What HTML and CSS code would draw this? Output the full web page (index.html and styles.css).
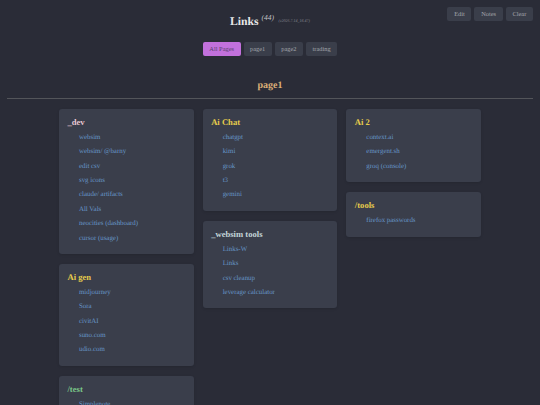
FILE: index.html
```html
<!DOCTYPE html>
<html lang="en">
<head>
    <meta charset="UTF-8">
    <meta name="viewport" content="width=device-width, initial-scale=1.0">
    <title>Links</title>
    <link rel="stylesheet" href="styles.css">
</head>
<body>
    <div class="top-actions">
        <button class="btn">Edit</button>
        <button class="btn">Notes</button>
        <button class="btn">Clear</button>
    </div>
    <h1 class="title">Links <sup class="count">(44)</sup> <span class="stamp">(v2025.7.14_16.47)</span></h1>
    <nav class="tabs">
        <button class="btn tab active">All Pages</button>
        <button class="btn tab">page1</button>
        <button class="btn tab">page2</button>
        <button class="btn tab">trading</button>
    </nav>
    <h2 class="page-name">page1</h2>
    <hr class="divider">
    <main class="columns">
        <div class="column">
            <section class="card">
                <h3 class="pink">_dev</h3>
                <ul>
                    <li><a href="#">websim</a></li>
                    <li><a href="#">websim/ @barny</a></li>
                    <li><a href="#">edit csv</a></li>
                    <li><a href="#">svg icons</a></li>
                    <li><a href="#">claude/ artifacts</a></li>
                    <li><a href="#">All Vals</a></li>
                    <li><a href="#">neocities (dashboard)</a></li>
                    <li><a href="#">cursor (usage)</a></li>
                </ul>
            </section>
            <section class="card">
                <h3 class="yellow">Ai gen</h3>
                <ul>
                    <li><a href="#">midjourney</a></li>
                    <li><a href="#">Sora</a></li>
                    <li><a href="#">civitAI</a></li>
                    <li><a href="#">suno.com</a></li>
                    <li><a href="#">udio.com</a></li>
                </ul>
            </section>
            <section class="card">
                <h3 class="green">/test</h3>
                <ul>
                    <li><a href="#">Simplenote</a></li>
                </ul>
            </section>
        </div>
        <div class="column">
            <section class="card">
                <h3 class="yellow">Ai Chat</h3>
                <ul>
                    <li><a href="#">chatgpt</a></li>
                    <li><a href="#">kimi</a></li>
                    <li><a href="#">grok</a></li>
                    <li><a href="#">t3</a></li>
                    <li><a href="#">gemini</a></li>
                </ul>
            </section>
            <section class="card">
                <h3 class="pale">_websim tools</h3>
                <ul>
                    <li><a href="#">Links-W</a></li>
                    <li><a href="#">Links</a></li>
                    <li><a href="#">csv cleanup</a></li>
                    <li><a href="#">leverage calculator</a></li>
                </ul>
            </section>
        </div>
        <div class="column">
            <section class="card">
                <h3 class="yellow">Ai 2</h3>
                <ul>
                    <li><a href="#">context.ai</a></li>
                    <li><a href="#">emergent.sh</a></li>
                    <li><a href="#">groq (console)</a></li>
                </ul>
            </section>
            <section class="card">
                <h3 class="yellow">/tools</h3>
                <ul>
                    <li><a href="#">firefox passwords</a></li>
                </ul>
            </section>
        </div>
    </main>
</body>
</html>
```

FILE: styles.css
```css
html {
    height: 100%;
    overflow: hidden;
}
body {
    margin: 0;
    padding: 0 7px;
    height: 405px;
    overflow: hidden;
    position: relative;
    background-color: #2a2c37;
    color: #e8e8e8;
    font-family: "Liberation Serif", serif;
    font-size: 7px;
    text-rendering: geometricPrecision;
}
.top-actions {
    position: absolute;
    top: 7px;
    right: 7px;
    display: flex;
    gap: 3px;
}
.btn {
    height: 14px;
    padding: 0 6.7px;
    border: none;
    border-radius: 2px;
    background-color: #3a3e4a;
    color: #a4a6ac;
    font-family: inherit;
    font-size: 6.4px;
    line-height: 14px;
}
.title {
    margin: 0;
    padding-top: 14px;
    height: 28px;
    box-sizing: border-box;
    padding-left: 223px;
    font-size: 11.7px;
    line-height: 14px;
    font-weight: bold;
    white-space: nowrap;
}
.count {
    font-size: 7.5px;
    font-weight: normal;
    font-style: italic;
    line-height: 0;
    color: #c0c1c5;
}
.stamp {
    font-size: 4px;
    font-weight: normal;
    font-style: italic;
    color: #8e9097;
    vertical-align: 3px;
    margin-left: 1.5px;
}
.tabs {
    display: flex;
    justify-content: center;
    gap: 3px;
    margin-top: 14px;
}
.tab {
    padding: 0 6.5px;
}
.tab.active {
    background-color: #c271dc;
    color: #54406a;
}
.page-name {
    margin: 24px 0 0;
    text-align: center;
    font-size: 10px;
    line-height: 12px;
    font-weight: bold;
    color: #dcb078;
}
.divider {
    margin: 6px 0 0;
    border: none;
    border-top: 1px solid #53555a;
}
.columns {
    display: grid;
    grid-template-columns: repeat(3, 134.7px);
    justify-content: center;
    gap: 9px;
    margin-top: 10px;
}
.column {
    display: flex;
    flex-direction: column;
    gap: 10px;
}
.card {
    padding: 8px 8.5px 8.2px;
    border-radius: 3px;
    background-color: #3a3e4b;
    box-shadow: 0 1px 3px rgba(0, 0, 0, 0.12);
}
h3 {
    margin: 0 0 2.8px;
    font-size: 8.6px;
    line-height: 11px;
    font-weight: bold;
}
.pink { color: #e8c8d2; }
.yellow { color: #e6cc4c; }
.green { color: #7cc98a; }
.pale { color: #c4d6da; }
ul {
    margin: 0;
    padding: 0 0 0 11.5px;
    list-style: none;
}
li {
    height: 14.4px;
    font-size: 6.9px;
    line-height: 14.4px;
    white-space: nowrap;
}
a {
    color: #6796c8;
    text-decoration: none;
}
```
